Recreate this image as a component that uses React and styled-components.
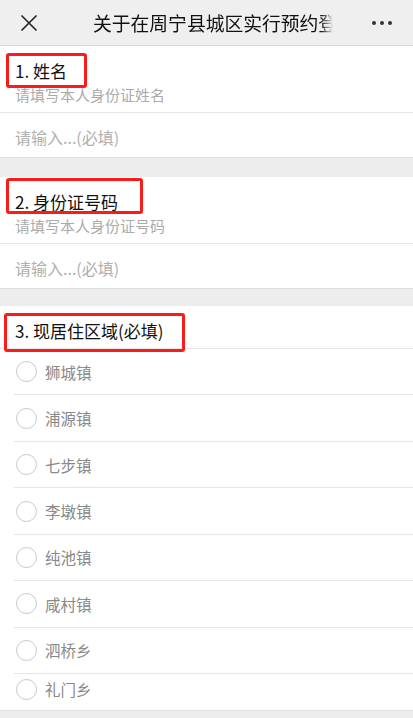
import React from "react";
import styled, { createGlobalStyle } from "styled-components";

const GlobalStyle = createGlobalStyle`
  html, body {
    margin: 0;
    padding: 0;
    background: #ededed;
    font-family: "Noto Sans CJK SC", "Noto Sans", sans-serif;
  }
  body {
    height: 718px;
    overflow: hidden;
  }
`;

const Page = styled.div`
  width: 413px;
  display: flex;
  flex-direction: column;
`;

const TopBar = styled.div`
  height: 45px;
  background: #efefef;
  border-bottom: 1px solid #d6d6d6;
  display: flex;
  align-items: center;
  padding: 0 0 0 20px;
`;

const CloseBtn = styled.div`
  width: 18px;
  height: 18px;
  display: flex;
  align-items: center;
  justify-content: center;
`;

const BarTitle = styled.div`
  margin-left: 55px;
  width: 240px;
  overflow: hidden;
  white-space: nowrap;
  font-size: 18.8px;
  line-height: 45px;
  color: #111;
  -webkit-mask-image: linear-gradient(to right, #000 228px, transparent 240px);
  mask-image: linear-gradient(to right, #000 228px, transparent 240px);
`;

const MoreBtn = styled.div`
  margin-left: auto;
  margin-right: 21px;
  display: flex;
  gap: 4px;
`;

const Dot = styled.span`
  width: 4px;
  height: 4px;
  border-radius: 50%;
  background: #333;
`;

const Section = styled.section`
  position: relative;
  background: #fff;
  border-bottom: 1px solid #dedede;
  margin-bottom: ${(p) => p.$gap}px;
`;

const QTitle = styled.div`
  padding: 11px 0 0 15px;
  line-height: 28px;
  font-size: 17px;
  color: #111;
  border-bottom: ${(p) => (p.$ruled ? "1px solid #e6e6e6" : "none")};
  padding-bottom: ${(p) => (p.$ruled ? 3 : 0)}px;
`;

const Mark = styled.div`
  position: absolute;
  left: ${(p) => p.$x}px;
  top: ${(p) => p.$y}px;
  width: ${(p) => p.$w}px;
  height: ${(p) => p.$h}px;
  box-sizing: border-box;
  border: 3px solid #fa1b1b;
  border-radius: 3px;
  pointer-events: none;
`;

const Hint = styled.div`
  padding: 0 0 7px 15px;
  line-height: 20px;
  font-size: 15px;
  color: #ababab;
`;

const InputRow = styled.div`
  border-top: 1px solid #e6e6e6;
  height: 45px;
  box-sizing: border-box;
  padding: 3px 0 0 15px;
  line-height: 42px;
  font-size: 16px;
  color: #b0b0b0;
`;

const Options = styled.div`
  display: flex;
  flex-direction: column;
`;

const Option = styled.label`
  margin-left: 14px;
  height: 46.45px;
  box-sizing: border-box;
  border-bottom: 1px solid #e6e6e6;
  display: flex;
  align-items: center;
  gap: 8px;
  padding-left: 2px;
  font-size: 15.5px;
  color: #888;
  &:last-child {
    border-bottom: none;
    height: 36px;
    padding-bottom: 6px;
  }
`;

const Radio = styled.span`
  width: 21px;
  height: 21px;
  box-sizing: border-box;
  border: 1px solid #c8c8c8;
  border-radius: 50%;
  flex-shrink: 0;
`;

const towns = ["狮城镇", "浦源镇", "七步镇", "李墩镇", "纯池镇", "咸村镇", "泗桥乡", "礼门乡"];

const TextQuestion = ({ title, hint, mark, gap }) => (
  <Section $gap={gap}>
    <QTitle>{title}</QTitle>
    <Hint>{hint}</Hint>
    <InputRow>请输入...(必填)</InputRow>
    <Mark $x={mark[0]} $y={mark[1]} $w={mark[2]} $h={mark[3]} />
  </Section>
);

const App = () => {
  return (
    <Page>
      <GlobalStyle />
      <TopBar>
        <CloseBtn>
          <svg width="18" height="18" viewBox="0 0 18 18">
            <path d="M1.5 1.5 L16.5 16.5 M16.5 1.5 L1.5 16.5" stroke="#222" strokeWidth="1.6" fill="none" />
          </svg>
        </CloseBtn>
        <BarTitle>关于在周宁县城区实行预约登记的通知</BarTitle>
        <MoreBtn>
          <Dot />
          <Dot />
          <Dot />
        </MoreBtn>
      </TopBar>

      <TextQuestion title="1. 姓名" hint="请填写本人身份证姓名" mark={[6, 7, 81, 35]} gap={19} />
      <TextQuestion title="2. 身份证号码" hint="请填写本人身份证号码" mark={[6, 1, 137, 36]} gap={17} />

      <Section $gap={0}>
        <QTitle $ruled>3. 现居住区域(必填)</QTitle>
        <Mark $x={4} $y={7} $w={181} $h={39} />
        <Options>
          {towns.map((t) => (
            <Option key={t}>
              <Radio />
              {t}
            </Option>
          ))}
        </Options>
      </Section>
    </Page>
  );
};

export default App;
